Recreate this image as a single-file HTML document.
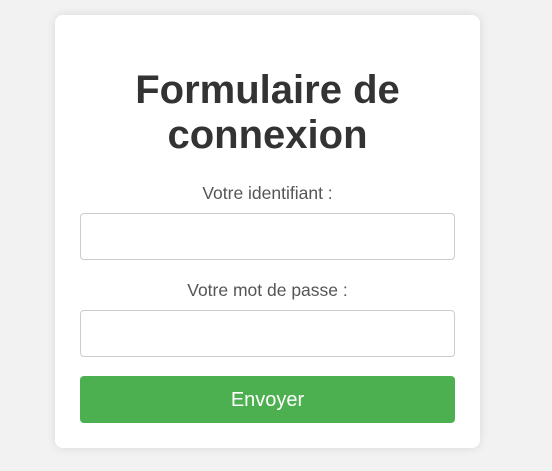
<!DOCTYPE html>
<html><head><style>
html,body{margin:0;padding:0;background:#f2f2f2;width:552px;height:471px;overflow:hidden;font-family:"Liberation Sans",Arial,sans-serif;}
.card{position:absolute;left:55px;top:15px;width:425px;height:433px;background:#fff;border-radius:8px;box-shadow:0 0 10px rgba(0,0,0,0.1);}
h1{position:absolute;left:0;width:425px;top:53px;margin:0;text-align:center;font-size:40px;line-height:45px;font-weight:bold;color:#333;}
.lbl{position:absolute;left:0;width:425px;text-align:center;font-size:17.5px;color:#555;}
.inp{position:absolute;left:25px;width:373px;height:45px;border:1px solid #ccc;border-radius:4px;background:#fff;}
.btn{position:absolute;left:25px;top:361px;width:375px;height:47px;background:#4caf50;border-radius:4px;color:#fff;font-size:20px;text-align:center;line-height:49px;}
</style></head><body>
<div class="card">
<h1>Formulaire de<br>connexion</h1>
<div class="lbl" style="top:168px">Votre identifiant :</div>
<div class="inp" style="top:198px"></div>
<div class="lbl" style="top:265px">Votre mot de passe :</div>
<div class="inp" style="top:295px"></div>
<div class="btn">Envoyer</div>
</div>
</body></html>
